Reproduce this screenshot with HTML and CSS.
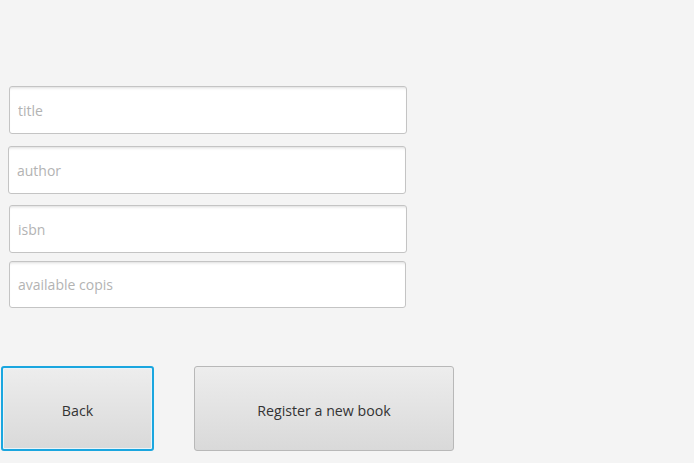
FILE: index.html
```html
<!DOCTYPE html>
<html>
<head>
<meta charset="utf-8">
<link rel="stylesheet" href="styles.css">
</head>
<body>
<div class="form">
  <input class="field f-title" type="text" placeholder="title">
  <input class="field f-author" type="text" placeholder="author">
  <input class="field f-isbn" type="text" placeholder="isbn">
  <input class="field f-copies" type="text" placeholder="available copis">
  <div class="actions">
    <button class="btn btn-back">Back</button>
    <button class="btn btn-register">Register a new book</button>
  </div>
</div>
</body>
</html>
```
FILE: styles.css
```css
html, body {
  margin: 0;
  padding: 0;
  background: #f4f4f4;
  width: 694px;
  height: 463px;
  overflow: hidden;
  font-family: "Open Sans", "Noto Sans", sans-serif;
}
.form {
  display: flex;
  flex-direction: column;
  align-items: flex-start;
  padding-top: 86px;
}
.field {
  box-sizing: border-box;
  height: 48px;
  width: 398px;
  border: 1px solid #c4c4c4;
  border-radius: 3px;
  background: #fff;
  box-shadow: inset 0 3px 3px -2px rgba(0,0,0,0.14);
  padding: 0 8px;
  font-family: inherit;
  font-size: 14px;
  color: #333;
  outline: none;
}
.field::placeholder {
  color: #b3b3b3;
}
.f-title { margin-left: 9px; }
.f-author { margin-left: 8px; margin-top: 12px; width: 398px; }
.f-isbn { margin-left: 9px; margin-top: 11px; }
.f-copies { margin-left: 9px; margin-top: 8px; height: 47px; width: 397px; }
.actions {
  display: flex;
  margin-top: 58px;
  margin-left: 1px;
  gap: 40px;
}
.btn {
  box-sizing: border-box;
  height: 85px;
  border: 1px solid #b8b8b8;
  border-radius: 3px;
  background: linear-gradient(#ededed, #d9d9d9);
  font-family: inherit;
  font-size: 14.2px;
  color: #333;
  padding: 3px 0 0 0;
}
.btn-back {
  width: 153px;
  border: 2px solid #1aa6df;
  box-shadow: inset 0 0 0 1px #e8f4fa;
}
.btn-register {
  width: 260px;
}
```
